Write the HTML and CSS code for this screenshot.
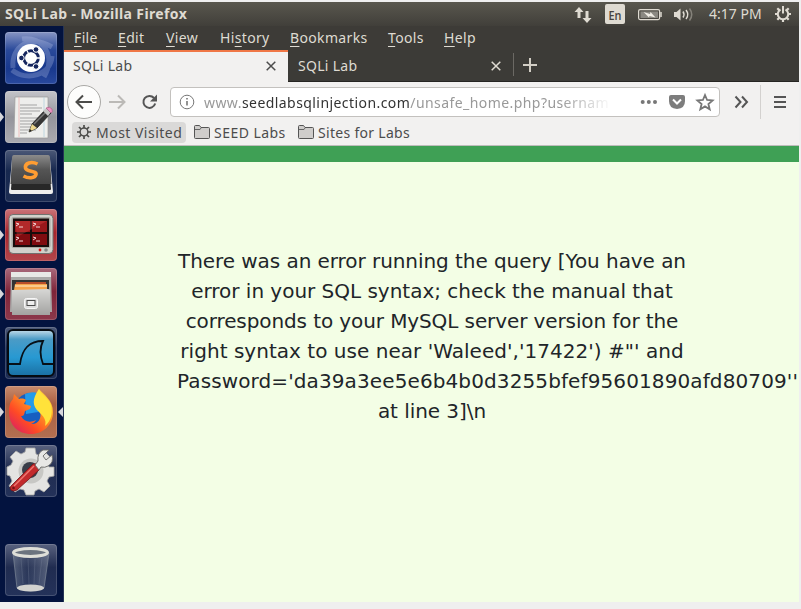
FILE: index.html
```html
<!DOCTYPE html>
<html lang="en">
<head>
<meta charset="utf-8">
<title>SQLi Lab</title>
<link rel="stylesheet" href="styles.css">
</head>
<body>
<div class="desktop">
  <header class="panel">
    <span class="panel-title">SQLi Lab - Mozilla Firefox</span>
    <svg class="indicators" width="120" height="24" viewBox="574 2 120 24">
      <g fill="#dfdbd2">
        <path d="M579 7l4.500 5h-3v6h-3v-6h-3z"/>
        <path d="M587 23l-4.500-5h3v-7h3v7h3z"/>
        <rect x="605" y="4" width="20" height="20" rx="2"/>
        <path d="M674 12h2.500l4-3.500v12l-4-3.500h-2.500z"/>
      </g>
      <text x="608.500" y="19.500" class="lang" textLength="13" lengthAdjust="spacingAndGlyphs">En</text>
      <rect x="638.600" y="9.600" width="21" height="10" rx="1.500" fill="none" stroke="#dfdbd2" stroke-width="1.200"/>
      <rect x="640.500" y="11.500" width="17.500" height="6.500" fill="#8b8982"/>
      <path d="M661 12v5" stroke="#dfdbd2" stroke-width="1.500"/>
      <path d="M643.500 12l6.500 2 .5-2 5 5.500-6-1.500-.5 1.500z" fill="#f0ede5"/>
      <path d="M683 11.500q2 3 0 6M686 10q3.500 4.500 0 9" fill="none" stroke="#dfdbd2" stroke-width="1.500"/>
      <path d="M689.500 8.500q4.500 6 0 12" fill="none" stroke="#85827a" stroke-width="1.500"/>
    </svg>
    <span class="clock">4:17 PM</span>
    <svg class="session" width="18" height="18" viewBox="0 0 18 18" fill="none" stroke="#dfdbd2">
      <path d="M6.500 4.500a5.200 5.200 0 1 0 5 0" stroke-width="2"/>
      <path d="M9 1v7.500" stroke-width="2"/>
      <path d="M1 9h2.500M14.500 9H17M3.300 3.300l2 2M14.700 3.300l-2 2M3.300 14.700l2-2M14.700 14.700l-2-2M9 14v3" stroke-width="2.200"/>
    </svg>
  </header>

  <div class="workspace">
    <nav class="launcher">
      <div class="tile tile-blue">
        <svg viewBox="0 0 52 52">
          <g fill="none" stroke="#dce4ff" stroke-width="5" opacity=".23"><path d="M8 36C6 14 25 2 47 15M17 7c22-3 34 18 22 38M47 24C46 43 22 50 7 38"/></g>
          <circle cx="26" cy="26" r="14" fill="#fff"/>
          <circle cx="26" cy="26" r="7.300" fill="none" stroke="#16265e" stroke-width="3"/>
          <g stroke="#fff" stroke-width="1.300"><path d="M26 26L36 26M26 26l-6-11M26 26l-6 11"/></g>
          <circle cx="26" cy="26" r="5.600" fill="#fff"/>
          <g fill="#16265e" stroke="#fff" stroke-width="1"><circle cx="16.400" cy="26" r="2.800"/><circle cx="31" cy="17.500" r="2.800"/><circle cx="31" cy="34.500" r="2.800"/></g>
        </svg>
      </div>
      <div class="tile tile-silver">
        <span class="arrow arrow-left"></span>
        <svg viewBox="0 0 52 52">
          <path d="M10 6h33v41H9z" fill="#eeeeec" stroke="#999" stroke-width=".7"/>
          <path d="M14 6v40" stroke="#eaa" stroke-width=".7"/><path d="M39 6v40" stroke="#acd" stroke-width=".7"/>
          <path d="M15 14h17M15 17h22M15 20h20M15 23h12M15 27h18M15 30h22M15 33h18M15 36h18M15 39h16M15 42h7" stroke="#a3a3a3" stroke-width="1"/>
          <path d="M24 41l3-8 14-15 5 4-14 15z" fill="#353535" stroke="#202020" stroke-width=".8"/>
          <path d="M29 33L42 20" stroke="#777" stroke-width="1.500"/>
          <path d="M24 41l3-8 5 4z" fill="#ecd78e"/><path d="M24 41l1-3 2 2z" fill="#222"/>
          <path d="M38 20l3-3 5 4-3 4z" fill="#c5c5c5"/><path d="M41 17q4-2 6 1 1 3-1 4z" fill="#ec94c1" stroke="#a96087" stroke-width=".7"/>
        </svg>
      </div>
      <div class="tile tile-dark">
        <svg viewBox="0 0 52 52">
          <defs><linearGradient id="slab" x2="0" y2="1"><stop stop-color="#8b8b8b"/><stop offset=".5" stop-color="#555"/><stop offset="1" stop-color="#444"/></linearGradient></defs>
          <path d="M7 9h38l3 33q0 2-2 2H6q-2 0-2-2z" fill="#eee"/>
          <path d="M6.500 33h39l.5 6q0 1-1 1H7q-1 0-1-1z" fill="#282828"/>
          <path d="M9 5h34q2 0 2 3l1.500 26h-41L7 8q0-3 2-3z" fill="url(#slab)"/>
          <path d="M32.500 14c-6-3-13-1-12 4 1 4 11.500 2.500 10.500 6.500-1 4-8 4-12.500 1.500" fill="none" stroke="#ff9d32" stroke-width="3.600"/>
        </svg>
      </div>
      <div class="tile tile-red">
        <span class="arrow arrow-left"></span>
        <svg viewBox="0 0 52 52">
          <rect x="4" y="5.500" width="44" height="39" rx="4" fill="#d1d1cb" stroke="#71716e"/>
          <rect x="6.500" y="8" width="39" height="31" rx="2" fill="#aaaaa4"/>
          <rect x="8" y="9.500" width="36" height="28.500" fill="#190c0c"/>
          <path d="M10 12h15v11H10zM27 12h15v11H27z" fill="#99171a"/><path d="M10 25h15v11H10zM27 25h15v11H27z" fill="#800b10"/>
          <path d="M10 12h32l-30 16z" fill="#e34b4b" opacity=".35"/>
          <path d="M11 14l3 1-3 2M14 18h4M28 14l3 1-3 2M31 18h4M11 28l3 1-3 2M14 32h4M28 28l3 1-3 2M31 32h4" fill="none" stroke="#f2d7d7"/>
          <circle cx="35" cy="41" r="1.400" fill="#e31515"/><circle cx="41" cy="41" r="1.800" fill="#888"/>
        </svg>
      </div>
      <div class="tile tile-wine">
        <span class="arrow arrow-left"></span>
        <svg viewBox="0 0 52 52">
          <defs><linearGradient id="drawer" x2="0" y2="1"><stop stop-color="#d7d7d5"/><stop offset="1" stop-color="#a3a3a1"/></linearGradient></defs>
          <path d="M6 5q0-1 2-1h36q2 0 2 1l1 39H5z" fill="#aaa9a8"/><path d="M6 4h40v5H6z" fill="#e8e8e6"/>
          <path d="M7 12h37v11H7z" fill="#333"/>
          <path d="M11 14h30v8H10z" fill="#b94e29"/><path d="M10 16h32v6H9z" fill="#f5a44b"/><path d="M10 18h32" stroke="#fff0ce"/>
          <path d="M7 22l36-1q2 0 2 2v24H7z" fill="url(#drawer)"/>
          <rect x="19.500" y="30.500" width="13" height="10" rx="2" fill="#ddd" stroke="#f7f7f7"/><rect x="22" y="32.500" width="8" height="5" fill="#eee" stroke="#4a4a4a"/>
        </svg>
      </div>
      <div class="tile tile-dark">
        <svg viewBox="0 0 52 52">
          <defs><linearGradient id="sea" x2="0" y2="1"><stop stop-color="#c4dce9"/><stop offset=".2" stop-color="#4b9bc6"/><stop offset=".6" stop-color="#2799d2"/><stop offset="1" stop-color="#1a6fa2"/></linearGradient></defs>
          <rect x="3" y="3" width="46" height="46" rx="5" fill="url(#sea)" stroke="#050a10" stroke-width="2"/>
          <path d="M4 37h11C17 23 23 14 38 14c-4 8-3 15 0 23h10" fill="none" stroke="#071018" stroke-width="1.800"/>
        </svg>
      </div>
      <div class="tile tile-orange">
        <span class="arrow arrow-left"></span><span class="arrow arrow-right"></span>
        <svg viewBox="0 0 52 52">
          <defs><linearGradient id="fox" x1="1" x2=".1" y2="1"><stop stop-color="#fff04a"/><stop offset=".38" stop-color="#ff9d23"/><stop offset=".7" stop-color="#ff4a25"/><stop offset="1" stop-color="#d61d69"/></linearGradient></defs>
          <circle cx="26" cy="24" r="17" fill="#175fc0"/><path d="M20 8q12-5 17 4l-4 14-12 2z" fill="#239bea"/>
          <path d="M34 3c4 5 14 11 14 23 0 13-10 22-22 22C13 48 4 39 4 26c0-6 1-10 4-13l1-5 5 5c3-1 6 0 7 1l-2 4 7 2-1 3-5 2c-1 4-1 5-4 5 3 6 9 7 15 4-2 3-3 3-5 4 7 1 11-6 9-12-5-5-7-11-1-23z" fill="url(#fox)"/>
          <path d="M34 3c2 6 9 8 12 16 2 8 0 16-6 21 2-6-2-10-6-14-7-6-7-13 0-23z" fill="#ffe23a"/>
        </svg>
      </div>
      <div class="tile tile-slate">
        <svg viewBox="0 0 52 52">
          <path d="M21 3h9l1 6 4 2 5-4 6 6-4 5 2 4h5v9l-5 1-2 4 3 5-6 6-5-3-4 2-1 4h-8l-2-5-4-1-5 3-6-6 3-5-2-5-3-1v-8l4-2 2-4-3-4 6-6 5 3 4-2z" fill="#e4e4e2" stroke="#a9a9a7" stroke-width=".8"/>
          <circle cx="26" cy="26" r="12.500" fill="#c7c7c4"/><circle cx="25" cy="25" r="8" fill="#393d48"/>
          <path d="M6 41L28 19q3-1 5 1t1 5L12 45q-4 2-6 0t0-4z" fill="#c22a2c" stroke="#721417" stroke-width=".8"/><path d="M9 41L29 21" stroke="#ef7770" stroke-width="1.500"/>
          <path d="M30 20l3-4q-1-8 5-11l6 0-6 6 3 4 6-5q2 8-4 11-3 2-7 1l-2 3z" fill="#e8e8e6" stroke="#696967" stroke-width=".9"/><circle cx="8.500" cy="43" r="1.300" fill="#731217"/>
        </svg>
      </div>
      <div class="tile tile-slate tile-trash">
        <svg viewBox="0 0 52 52">
          <defs><linearGradient id="can" x2="1"><stop stop-color="#9aa4b1" stop-opacity=".4"/><stop offset=".4" stop-color="#44516d" stop-opacity=".3"/><stop offset="1" stop-color="#aab1bc" stop-opacity=".4"/></linearGradient></defs>
          <path d="M8 9h36l-5 35q-13 6-27 0z" fill="url(#can)" stroke="#7d8796" stroke-width=".7"/>
          <path d="M16 14l2 26M23 15l1 25M30 15l-1 25M37 14l-3 26" stroke="#8691a5" opacity=".25"/>
          <ellipse cx="25.500" cy="44" rx="13.500" ry="3.500" fill="#d2d2cf"/>
          <ellipse cx="25.500" cy="8.500" rx="17" ry="4" fill="#6b737f" stroke="#deded8" stroke-width="3"/>
        </svg>
      </div>
    </nav>

    <main class="browser">
      <nav class="menubar"><span class="m1"><u>F</u>ile</span><span class="m2"><u>E</u>dit</span><span class="m3"><u>V</u>iew</span><span class="m4">Hi<u>s</u>tory</span><span class="m5"><u>B</u>ookmarks</span><span class="m6"><u>T</u>ools</span><span class="m7"><u>H</u>elp</span></nav>
      <div class="tabs">
        <div class="tab tab-active"><span class="tab-label">SQLi Lab</span><svg width="10" height="10" viewBox="0 0 10 10"><path d="M.7.7l8.600 8.600M9.300.7L.7 9.300"/></svg></div>
        <div class="tab"><span class="tab-label">SQLi Lab</span><svg width="10" height="10" viewBox="0 0 10 10"><path d="M.7.7l8.600 8.600M9.300.7L.7 9.300"/></svg></div>
        <div class="new-tab"><svg width="14" height="14" viewBox="0 0 14 14"><path d="M7 0v14M0 7h14"/></svg></div>
      </div>
      <div class="toolbar">
        <svg class="nav-icons" width="106" height="36" viewBox="64 84 106 36" fill="none">
          <circle cx="84" cy="102" r="16.500" fill="#fdfdfc" stroke="#aaa9a6"/>
          <path d="M92 102H77.500M83 95.500L76.500 102l6.500 6.500" stroke="#4b4b49" stroke-width="2"/>
          <path d="M109 102h14.500M118 95.500l6.500 6.500-6.500 6.500" stroke="#bbb9b6" stroke-width="2"/>
          <path d="M154 98a6 6 0 1 0 1.200 5.500" stroke="#555" stroke-width="2"/><path d="M157 94.500v7h-7z" fill="#555"/>
        </svg>
        <div class="urlbar">
          <svg class="info" width="16" height="16" viewBox="0 0 16 16" fill="none" stroke="#777"><circle cx="8" cy="8" r="6.800"/><path d="M8 7v4.500M8 4v1.600" stroke-width="1.600"/></svg>
          <div class="address"><span class="sub">www.</span><span class="host">seedlabsqlinjection.com</span><span class="path">/unsafe_home.php?usernam</span></div>
          <svg class="page-actions" width="76" height="24" viewBox="640 90 76 24">
            <g fill="#777"><circle cx="642.700" cy="102" r="2"/><circle cx="648.800" cy="102" r="2"/><circle cx="655" cy="102" r="2"/></g>
            <path d="M671 95h12q2 0 2 2v4q0 7.500-8 8-8-.5-8-8v-4q0-2 2-2z" fill="#7d7d7d"/><path d="M673 99.500l4 4 4-4" fill="none" stroke="#fff" stroke-width="2"/>
            <path d="M705 95l2.100 5 5.500.4-4.200 3.600 1.300 5.300-4.700-2.900-4.700 2.900 1.300-5.300-4.200-3.600 5.500-.4z" fill="none" stroke="#777" stroke-width="1.800"/>
          </svg>
        </div>
        <svg class="tool-icons" width="79" height="36" viewBox="720 84 79 36" fill="none" stroke="#555" stroke-width="2"><path d="M735.500 96.500l5 5.500-5 5.500M742 96.500l5 5.500-5 5.500"/><path d="M760.500 85v34" stroke="#d3d1cf" stroke-width="1"/><path d="M774 97h12M774 102h12M774 107h12"/></svg>
      </div>
      <div class="bookmarks">
        <div class="bookmark selected"><svg width="14" height="14" viewBox="0 0 14 14" fill="none" stroke="#4c4c4a"><circle cx="7" cy="7" r="3.900" stroke-width="1.500"/><path d="M7 0v3M7 11v3M0 7h3M11 7h3M2 2l2.200 2.200M9.800 9.800L12 12M12 2L9.800 4.200M4.200 9.800L2 12" stroke-width="1.700"/></svg><span class="b1">Most Visited</span></div>
        <div class="bookmark folder-one"><svg width="16" height="14" viewBox="0 0 16 14"><path d="M.5 12.500v-11q0-1 1-1h4l1.500 2h7.500q1 0 1 1v9q0 1-1 1h-13q-1 0-1-1z" fill="#cfcdcb" stroke="#555"/><path d="M1 4.500h5l1-1.500" fill="none" stroke="#666"/></svg><span class="b2">SEED Labs</span></div>
        <div class="bookmark"><svg width="16" height="14" viewBox="0 0 16 14"><path d="M.5 12.500v-11q0-1 1-1h4l1.500 2h7.500q1 0 1 1v9q0 1-1 1h-13q-1 0-1-1z" fill="#cfcdcb" stroke="#555"/><path d="M1 4.500h5l1-1.500" fill="none" stroke="#666"/></svg><span class="b3">Sites for Labs</span></div>
      </div>
      <section class="page">
        <div class="page-bar"></div>
        <p class="message">There was an error running the query [You have an<br><span class="line-normal">error in your SQL syntax; check the manual that</span><br><span class="line-tight">corresponds to your MySQL server version for the</span><br><span class="line-loose">right syntax to use near 'Waleed','17422') #"' and</span><br><span class="long-line">Password='da39a3ee5e6b4b0d3255bfef95601890afd80709''</span>at line 3]\n</p>
      </section>
    </main>
  </div>
</div>
</body>
</html>
```

FILE: styles.css
```css
* { box-sizing: border-box; }
body { margin: 0; background: #efefef; font: 14px/20px "Noto Sans", "Open Sans", sans-serif; overflow: hidden; }
svg { display: block; flex: none; }
.desktop { width: 799px; height: 600px; margin-top: 2px; overflow: hidden; }
.panel { height: 24px; display: flex; align-items: center; padding: 0 7px 0 5px; color: #dfdbd2; background: linear-gradient(#59574e, #413f3a); white-space: nowrap; }
.panel-title { width: 569px; flex: none; font-weight: 700; letter-spacing: .36px; }
.lang { font: 600 13px "Open Sans", sans-serif; fill: #45433e; }
.clock { width: 65px; flex: none; margin-left: 15px; }
.workspace { display: flex; height: 576px; }
.launcher { width: 64px; flex: none; display: flex; flex-direction: column; gap: 7px; padding: 6px 0 6px 5px; background: #03133f; border-right: 1px solid #263455; }
.tile { position: relative; width: 52px; height: 52px; flex: none; border-radius: 4px; box-shadow: inset 0 0 0 1px #ffffff28; }
.tile svg { width: 52px; height: 52px; }
.tile-blue { background: linear-gradient(#8795c3, #29499a 35%, #18388d 70%, #29499e); }
.tile-silver { background: linear-gradient(#c3c3c8, #94949b 50%, #aaaab0); }
.tile-dark { background: linear-gradient(#4b5877, #17284f 40%, #1c2c53); }
.tile-red { background: linear-gradient(#ca7378, #a7262d 45%, #b3464b); }
.tile-wine { background: linear-gradient(#a8697b, #7e2439 45%, #8c384b); }
.tile-orange { background: linear-gradient(#c88b6d, #a95f42 35%, #b36f51); }
.tile-slate { background: linear-gradient(#59627f, #202c50 45%, #24325a); }
.tile-trash { margin-top: auto; }
.arrow { position: absolute; top: 21px; border-top: 5px solid transparent; border-bottom: 5px solid transparent; }
.arrow-left { left: -5px; border-left: 4px solid #d6d7dc; }
.arrow-right { right: -6px; border-right: 5px solid #d6d7dc; }
.browser { width: 735px; min-width: 0; background: #f2f1f0; color: #4c4c4c; }
.menubar { height: 24px; display: flex; padding: 2px 0 0 10px; background: #3d3b37; color: #dfdbd2; white-space: nowrap; letter-spacing: .35px; }
.menubar u { text-underline-offset: 3px; text-decoration-thickness: 1px; }
.m1 { width: 44px; } .m2 { width: 48px; } .m3 { width: 54px; } .m4 { width: 70px; } .m5 { width: 98px; } .m6 { width: 56px; }
.tabs { height: 32px; display: flex; background: #3c3b37; border-bottom: 1px solid #262522; letter-spacing: .3px; }
.tab { width: 224px; display: flex; align-items: center; justify-content: space-between; padding: 0 12px 0 9px; color: #dfdbd2; }
.tab-active { margin-right: 1px; height: 32px; color: #4c4c4c; background: #f2f1f0; border-top: 2px solid #f07746; padding-bottom: 2px; }
.tab svg { stroke: currentColor; stroke-width: 1.500; fill: none; }
.new-tab { display: flex; align-items: center; margin: 3px 0 5px; padding-left: 9px; border-left: 1px solid #6b6964; }
.new-tab svg { stroke: #d2cec5; stroke-width: 2; }
.toolbar { height: 38px; display: flex; align-items: center; padding-top: 2px; }
.urlbar { width: 550px; height: 30px; flex: none; display: flex; align-items: center; padding-left: 8px; background: #fff; border: 1px solid #c3c1be; border-radius: 4px; }
.address { width: 404px; flex: none; margin: 0 32px 0 9px; white-space: nowrap; color: #999; letter-spacing: .43px; padding-top: 1px; -webkit-mask-image: linear-gradient(90deg, #000 88%, transparent 101%); mask-image: linear-gradient(90deg, #000 88%, transparent 101%); }
.host { color: #333; }
.bookmarks { height: 26px; display: flex; align-items: center; padding: 0 0 1px 8px; border-bottom: 1px solid #bebdbb; white-space: nowrap; }
.bookmark { display: flex; align-items: center; height: 20px; gap: 4px; }
.bookmark span { padding-top: 1px; }
.b1 { letter-spacing: .48px; }
.b2 { letter-spacing: .46px; }
.b3 { letter-spacing: .3px; }
.selected { width: 114px; height: 21px; padding-left: 5px; gap: 5px; background: #dad9d8; border-radius: 4px; }
.folder-one { width: 104px; margin-left: 8px; }
.page { height: 456px; background: #f3fee5; overflow: hidden; }
.page-bar { height: 16px; background: #3fa055; }
.message { width: 510px; margin: 84px 0 0 113px; font: 20px/30px "DejaVu Sans", sans-serif; letter-spacing: -.06px; color: #212529; text-align: center; white-space: nowrap; }
.line-normal { letter-spacing: -.02px; }
.line-tight { letter-spacing: -.1px; }
.line-loose { letter-spacing: .03px; }
.long-line { display: block; text-align: left; height: 30px; letter-spacing: .11px; }
```
